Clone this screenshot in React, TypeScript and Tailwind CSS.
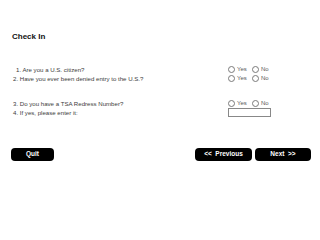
import React from 'react';

const font = { fontFamily: '"Liberation Sans", Arial, sans-serif' };

function Radio({ label }: { label: string }) {
  return (
    <span className="flex items-center">
      <span className="w-[7px] h-[7px] rounded-full border border-[#7a7a7a] bg-white" />
      <span className="ml-[2px] text-[6px] text-[#5a5a5a]">{label}</span>
    </span>
  );
}

function YesNo() {
  return (
    <div className="flex items-center">
      <div className="w-[24px]">
        <Radio label="Yes" />
      </div>
      <Radio label="No" />
    </div>
  );
}

function Row({ text, indent, children }: { text: string; indent?: boolean; children?: React.ReactNode }) {
  return (
    <div className="flex items-center h-[9px]">
      <div className={`w-[228px] text-[6.1px] leading-[9px] text-[#3c3c3c] ${indent ? 'pl-[16px]' : 'pl-[13px]'}`}>{text}</div>
      {children}
    </div>
  );
}

export default function App() {
  return (
    <div className="w-[320px] h-[240px] bg-white overflow-hidden" style={font}>
      <div className="pt-[32px] pl-[12px] h-[42px]">
        <h1 className="text-[8px] leading-[10px] font-bold text-[#111]">Check In</h1>
      </div>

      <div className="mt-[23px]">
        <Row text="1. Are you a U.S. citizen?" indent>
          <YesNo />
        </Row>
        <Row text="2. Have you ever been denied entry to the U.S.?">
          <YesNo />
        </Row>
      </div>

      <div className="mt-[16px]">
        <Row text="3. Do you have a TSA Redress Number?">
          <YesNo />
        </Row>
        <Row text="4. If yes, please enter it:">
          <input className="w-[43px] h-[9px] border border-[#888] bg-white outline-none" />
        </Row>
      </div>

      <div className="mt-[31px] flex items-center justify-between pl-[11px] pr-[9px]">
        <button className="w-[43px] h-[13px] rounded-[4px] bg-black text-white text-[6.5px] font-bold leading-none">
          Quit
        </button>
        <div className="flex gap-[3px]">
          <button className="w-[57px] h-[13px] rounded-[4px] bg-black text-white text-[6.5px] font-bold leading-none">
            &lt;&lt;&nbsp; Previous
          </button>
          <button className="w-[56px] h-[13px] rounded-[4px] bg-black text-white text-[6.5px] font-bold leading-none">
            Next &nbsp;&gt;&gt;
          </button>
        </div>
      </div>
    </div>
  );
}
